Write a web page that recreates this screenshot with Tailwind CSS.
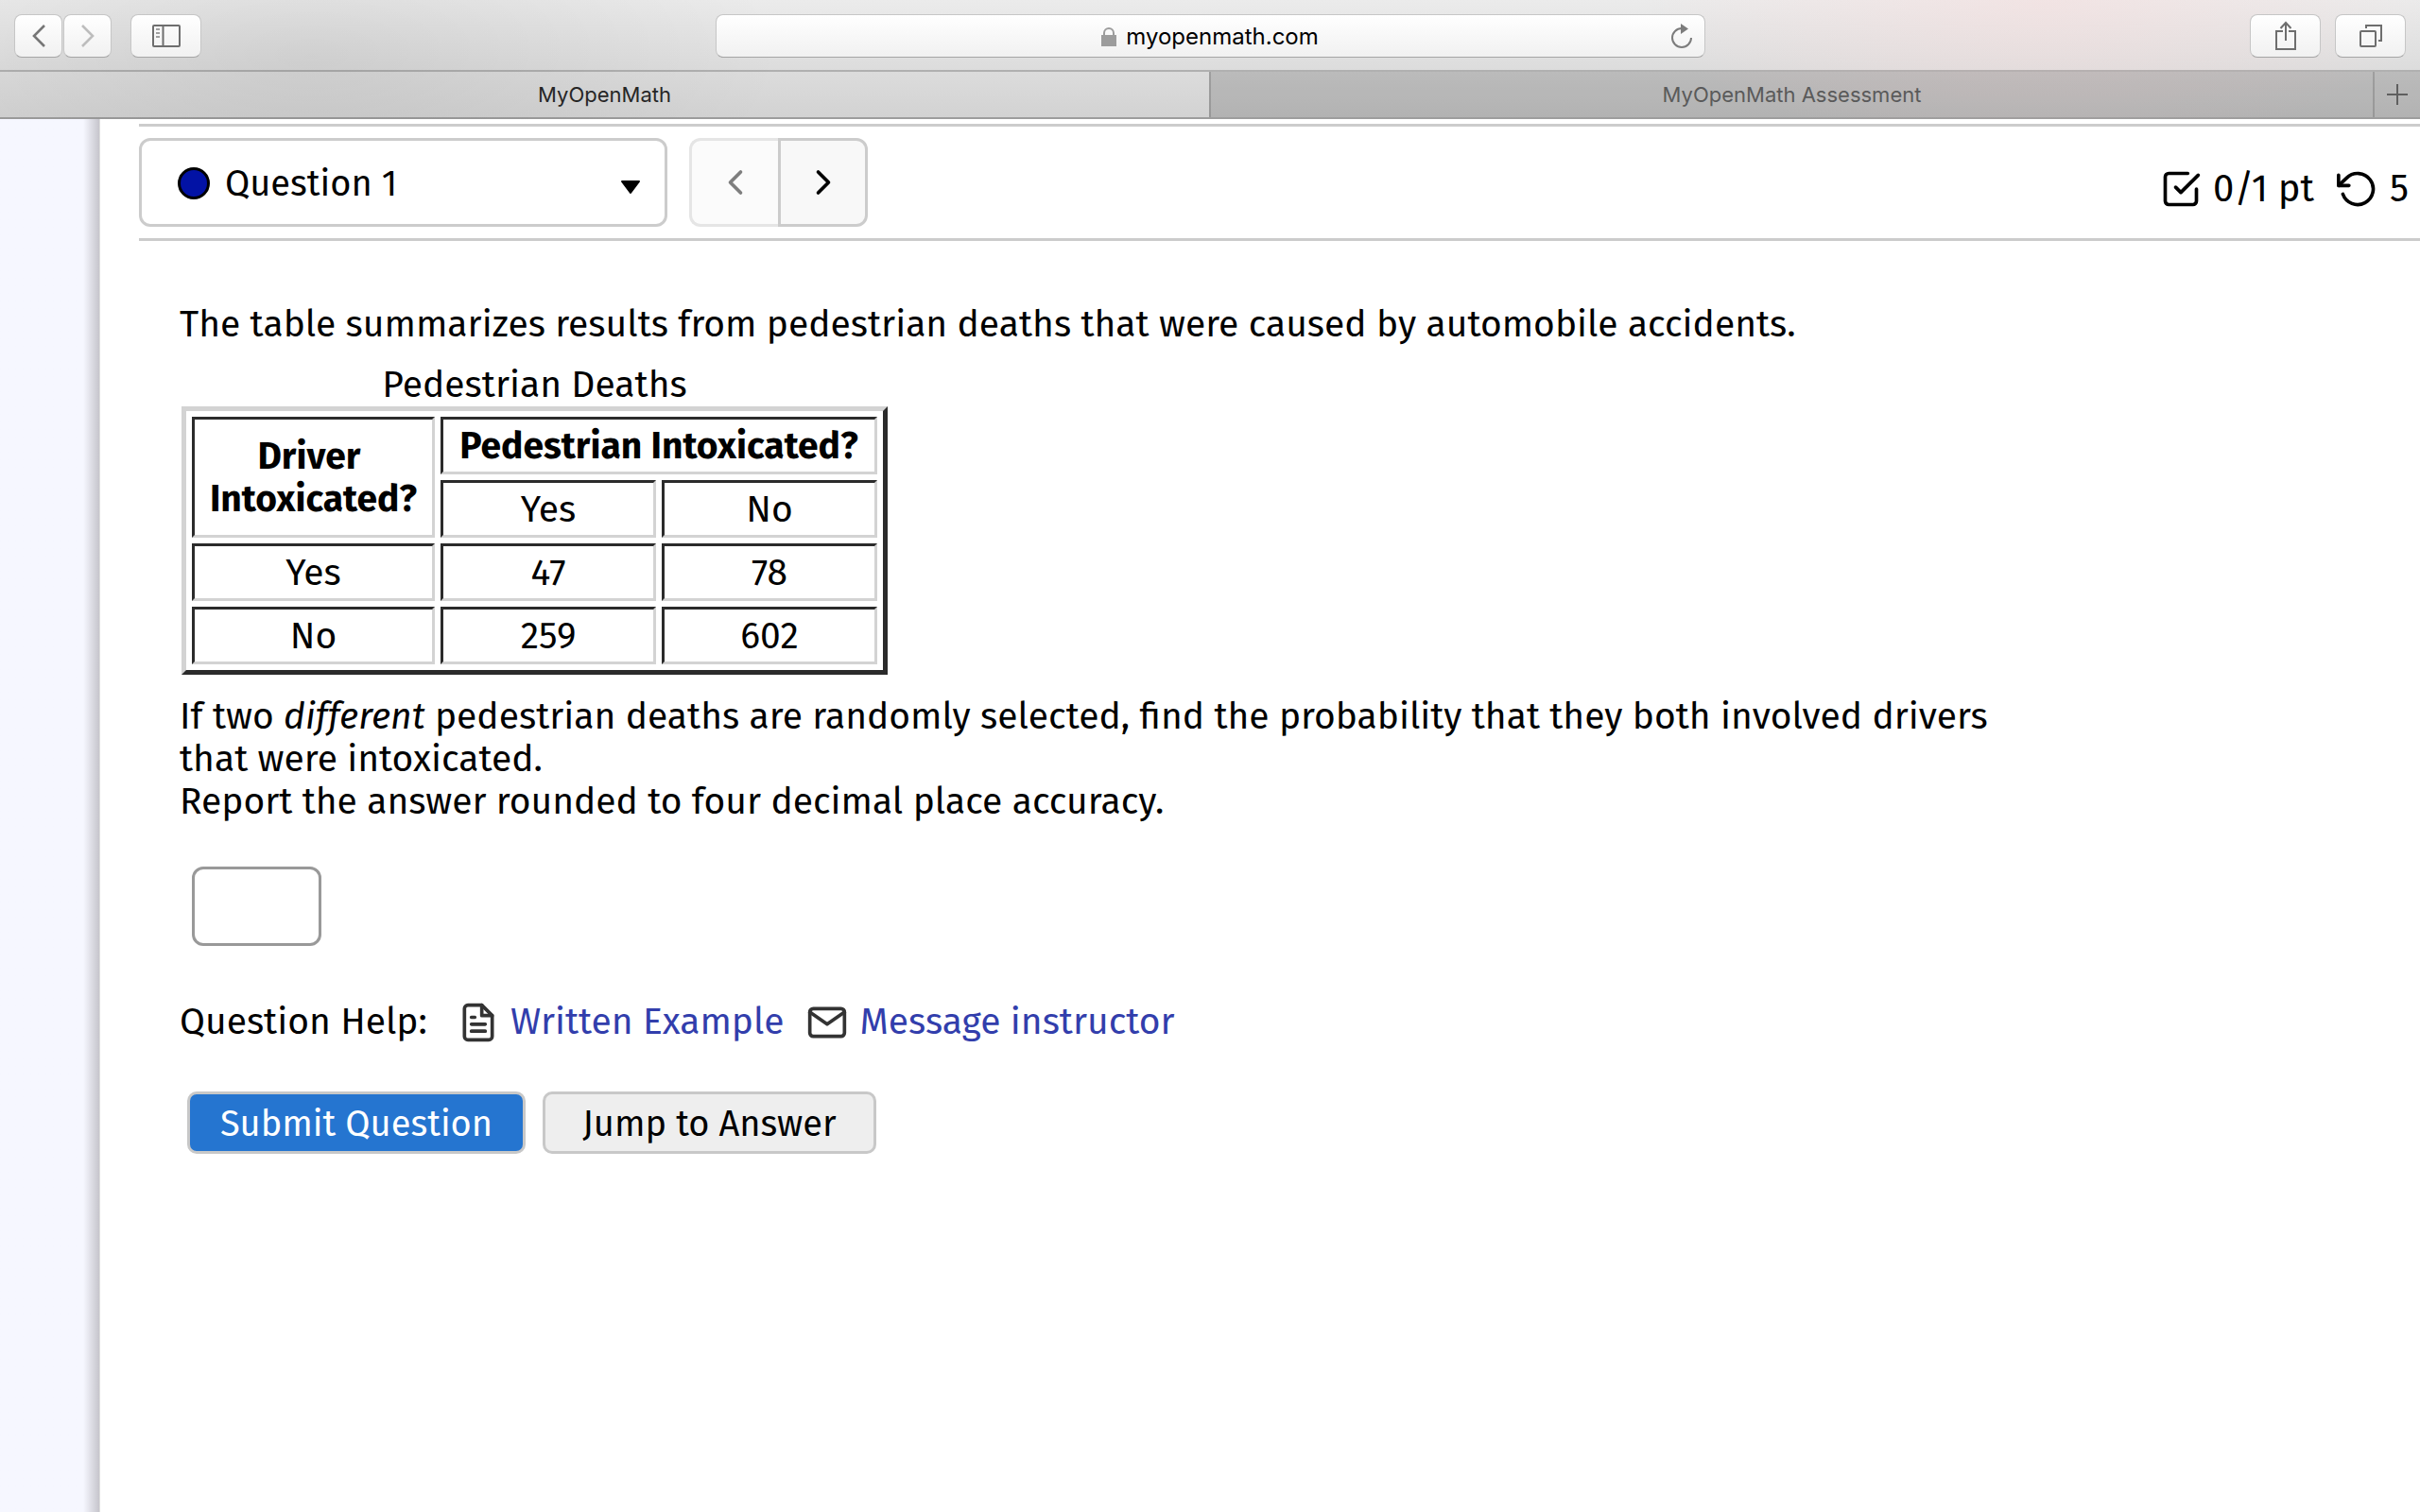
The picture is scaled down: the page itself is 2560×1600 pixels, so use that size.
<!DOCTYPE html>
<html lang="en">
<head>
    <meta charset="UTF-8">
    <meta name="viewport" content="width=device-width, initial-scale=1.0">
    <title>MyOpenMath</title>
    <script src="https://cdn.jsdelivr.net/npm/@tailwindcss/browser@4"></script>
</head>
<body class="bg-white text-black font-['Fira_Sans','Open_Sans',sans-serif]">
    <div class="min-h-screen flex flex-col">
        <!-- Browser chrome -->
        <header class="font-['Inter',sans-serif] bg-[radial-gradient(ellipse_420px_160px_at_2160px_0px,#f8dcdc80,transparent),radial-gradient(ellipse_500px_200px_at_330px_60px,#00000012,transparent),linear-gradient(to_bottom,#ebebeb,#dcdcdc_60%,#d2d2d2)]">
            <div class="flex items-center justify-between h-[76px] pt-0.5 px-[15px] border-b-2 border-black/20">
                <div class="flex items-center flex-1">
                    <button aria-label="Back" class="w-[51px] h-[46px] flex items-center justify-center rounded-lg border border-[#c6c6c6] border-b-[#a5a5a5] bg-linear-to-b from-white to-[#f1f1f1]">
                        <svg class="w-4 h-6" viewBox="0 0 16 24" fill="none" stroke="#767676" stroke-width="2.6"><path d="M14 1 3 12l11 11"/></svg>
                    </button>
                    <button aria-label="Forward" class="ml-px w-[51px] h-[46px] flex items-center justify-center rounded-lg border border-[#c6c6c6] border-b-[#a5a5a5] bg-linear-to-b from-white to-[#f1f1f1]">
                        <svg class="w-4 h-6" viewBox="0 0 16 24" fill="none" stroke="#bdbdbd" stroke-width="2.6"><path d="M2 1l11 11L2 23"/></svg>
                    </button>
                    <button aria-label="Show sidebar" class="ml-5 w-[75px] h-[46px] flex items-center justify-center rounded-lg border border-[#c6c6c6] border-b-[#a5a5a5] bg-linear-to-b from-white to-[#f1f1f1]">
                        <svg class="w-8 h-6" viewBox="0 0 32 24" fill="none" stroke="#6e6e6e" stroke-width="2"><rect x="2" y="1" width="28" height="22" rx="1"/><path d="M12.500 1v22"/><path d="M5 5h4M5 9h4M5 13h4" stroke="#a0a0a0"/></svg>
                    </button>
                </div>
                <div class="w-[1047px] h-[46px] flex items-center px-3 rounded-lg border border-[#c6c6c6] border-b-[#a5a5a5] bg-linear-to-b from-white to-[#f1f1f1]">
                    <span class="w-6"></span>
                    <div class="flex-1 flex items-center justify-center gap-2.5 pt-0.5">
                        <svg class="w-4 h-5" viewBox="0 0 16 20" fill="none"><rect y="8" width="16" height="12" fill="#9c9c9c"/><path d="M3 9V6a5 5 0 0 1 10 0v3" stroke="#9c9c9c" stroke-width="2"/></svg>
                        <span class="text-2xl">myopenmath.com</span>
                    </div>
                    <button aria-label="Reload">
                        <svg class="w-6 h-7" viewBox="0 0 24 28" fill="none"><path d="M12 6a10 10 0 1 0 10 10" stroke="#7c7c7c" stroke-width="2"/><path d="M11 1v11l8-5.500z" fill="#7c7c7c"/></svg>
                    </button>
                </div>
                <div class="flex items-center justify-end gap-[15px] flex-1">
                    <button aria-label="Share" class="w-[75px] h-[46px] flex items-center justify-center rounded-lg border border-[#c6c6c6] border-b-[#a5a5a5] bg-linear-to-b from-white to-[#f1f1f1]">
                        <svg class="w-6 h-8" viewBox="0 0 24 32" fill="none" stroke="#6e6e6e" stroke-width="2"><path d="M9 11H2v19h20V11h-7M12 21V2M6.500 8 12 2l5.500 6"/></svg>
                    </button>
                    <button aria-label="Show tabs" class="w-[75px] h-[46px] flex items-center justify-center rounded-lg border border-[#c6c6c6] border-b-[#a5a5a5] bg-linear-to-b from-white to-[#f1f1f1]">
                        <svg class="w-6 h-6" viewBox="0 0 24 24" fill="none" stroke="#6e6e6e" stroke-width="2"><rect x="1" y="7" width="16" height="16" rx="1"/><path d="M7 4V1h16v16h-3"/></svg>
                    </button>
                </div>
            </div>
            <nav class="flex h-[50px] text-[22px] border-b-2 border-black/25">
                <a href="#" class="flex-1 flex items-center justify-center text-[#262626]">MyOpenMath</a>
                <div class="flex-1 flex bg-black/15 border-l-2 border-black/15">
                    <a href="#" class="flex-1 flex items-center justify-center text-[#5a5a5a]">MyOpenMath Assessment</a>
                    <button aria-label="New tab" class="w-[50px] flex items-center justify-center border-l-2 border-black/15">
                        <svg class="w-[22px] h-[22px]" viewBox="0 0 22 22" stroke="#5f5f5f" stroke-width="2"><path d="M11 0v22M0 11h22"/></svg>
                    </button>
                </div>
            </nav>
        </header>

        <!-- Page -->
        <div class="flex-1 flex">
            <aside class="w-[105px] bg-linear-to-r from-[#f6f7ff] from-84% to-[#c6c5cc]"></aside>
            <main class="flex-1 border-l border-[#dedede] pl-[41px] pt-[5px]">
                <div class="flex items-center justify-between py-3 pr-3 border-y-3 border-[#cccccc]">
                    <div class="flex">
                        <div class="relative w-[559px]">
                            <select aria-label="Question" class="appearance-none w-full h-[94px] pl-[88px] pt-0.5 rounded-[12px] border-3 border-[#cccccc] bg-white text-[38px]">
                                <option>Question 1</option>
                            </select>
                            <span class="absolute left-[41px] top-[31px] w-[34px] h-[34px] rounded-full border-3 border-black bg-[#0212a5] pointer-events-none"></span>
                            <svg class="absolute right-7 top-11 w-[22px] h-4 pointer-events-none" viewBox="0 0 22 16"><path d="M2 2h18l-9 12z" stroke="#000" stroke-width="2" stroke-linejoin="round"/></svg>
                        </div>
                        <div class="flex ml-[23px]">
                            <button disabled aria-label="Previous question" class="w-[94px] h-[94px] flex items-center justify-center rounded-l-[12px] border-3 border-r-0 border-[#cccccc] bg-[#f8f8f8] opacity-50">
                                <svg class="w-11 h-11" viewBox="0 0 24 24" fill="none" stroke="currentColor" stroke-width="2" stroke-linecap="round" stroke-linejoin="round"><path d="m15 18-6-6 6-6"/></svg>
                            </button>
                            <button aria-label="Next question" class="w-[95px] h-[94px] flex items-center justify-center rounded-r-[12px] border-3 border-[#cccccc] bg-[#f8f8f8]">
                                <svg class="w-11 h-11" viewBox="0 0 24 24" fill="none" stroke="currentColor" stroke-width="2" stroke-linecap="round" stroke-linejoin="round"><path d="m9 18 6-6-6-6"/></svg>
                            </button>
                        </div>
                    </div>
                    <div class="flex items-center mt-[14px] text-[40px] leading-[45px]">
                        <svg class="w-11 h-11 mr-3" viewBox="0 0 24 24" fill="none" stroke="currentColor" stroke-width="2" stroke-linecap="round" stroke-linejoin="round"><path d="m9 11 3 3L22 4"/><path d="M21 12v7a2 2 0 0 1-2 2H5a2 2 0 0 1-2-2V5a2 2 0 0 1 2-2h11"/></svg>
                        <span class="mr-6">0/1 pt</span>
                        <svg class="w-11 h-11 mr-3" viewBox="0 0 24 24" fill="none" stroke="currentColor" stroke-width="2" stroke-linecap="round" stroke-linejoin="round"><path d="M1 4v6h6"/><path d="M3.510 15a9 9 0 1 0 2.130-9.360L1 10"/></svg>
                        <span>5</span>
                    </div>
                </div>

                <!-- Question -->
                <div class="pl-[43px] pt-[66px] text-[39px] leading-[45px]">
                    <p>The table summarizes results from pedestrian deaths that were caused by automobile accidents.</p>
                    <table class="mt-[19px] ml-0.5 w-[747px] table-fixed border-separate border-spacing-[6px] border-5 border-t-[#d3d3d3] border-l-[#d3d3d3] border-r-[#2b2b2b] border-b-[#2b2b2b] text-center [&_th]:border-3 [&_th]:border-t-[#2b2b2b] [&_th]:border-l-[#2b2b2b] [&_th]:border-r-[#d3d3d3] [&_th]:border-b-[#d3d3d3] [&_td]:border-3 [&_td]:border-t-[#2b2b2b] [&_td]:border-l-[#2b2b2b] [&_td]:border-r-[#d3d3d3] [&_td]:border-b-[#d3d3d3] [&_td]:pt-1.5 [&_td]:pb-1 [&_th]:pt-1.5 [&_th]:pb-1">
                        <caption>Pedestrian Deaths</caption>
                        <colgroup>
                            <col class="w-[257px]">
                            <col>
                            <col>
                        </colgroup>
                        <tbody>
                            <tr>
                                <th rowspan="2">Driver&nbsp;<br>Intoxicated?</th>
                                <th colspan="2">Pedestrian Intoxicated?</th>
                            </tr>
                            <tr>
                                <td>Yes</td>
                                <td>No</td>
                            </tr>
                            <tr>
                                <td>Yes</td>
                                <td>47</td>
                                <td>78</td>
                            </tr>
                            <tr>
                                <td>No</td>
                                <td>259</td>
                                <td>602</td>
                            </tr>
                        </tbody>
                    </table>
                    <p class="mt-[22px] max-w-[1980px]">If two <em>different</em> pedestrian deaths are randomly selected, find the probability that they both involved drivers that were intoxicated.<br>Report the answer rounded to four decimal place accuracy.</p>

                    <input type="text" aria-label="Answer" class="block mt-[46px] ml-[13px] w-[137px] h-[84px] px-3 rounded-[12px] border-3 border-[#999999] bg-white">

                    <div class="flex items-center mt-[58px]">
                        <span class="mr-8">Question Help:</span>
                        <a href="#" class="flex items-center gap-3 mr-6 text-[#323eac]">
                            <svg class="w-11 h-11" viewBox="0 0 24 24" fill="none" stroke="#333333" stroke-width="2" stroke-linecap="round" stroke-linejoin="round"><path d="M14 2H6a2 2 0 0 0-2 2v16a2 2 0 0 0 2 2h12a2 2 0 0 0 2-2V8z"/><path d="M14 2v6h6M16 13H8M16 17H8M10 9H8"/></svg>
                            Written Example
                        </a>
                        <a href="#" class="flex items-center gap-3 text-[#323eac]">
                            <svg class="w-11 h-11" viewBox="0 0 24 24" fill="none" stroke="#333333" stroke-width="2" stroke-linecap="round" stroke-linejoin="round"><path d="M4 4h16a2 2 0 0 1 2 2v12a2 2 0 0 1-2 2H4a2 2 0 0 1-2-2V6a2 2 0 0 1 2-2z"/><path d="m22 6-10 7L2 6"/></svg>
                            Message instructor
                        </a>
                    </div>

                    <div class="flex gap-[18px] mt-[51px] ml-2 text-[38px]">
                        <button class="h-[66px] w-[358px] pt-0.5 rounded-[10px] border-3 border-[#c8c8c8] bg-[#2575d0] text-white">Submit Question</button>
                        <button class="h-[66px] w-[353px] pt-0.5 rounded-[10px] border-3 border-[#c8c8c8] bg-[#eeeeee]">Jump to Answer</button>
                    </div>
                </div>
            </main>
        </div>
    </div>
</body>
</html>
